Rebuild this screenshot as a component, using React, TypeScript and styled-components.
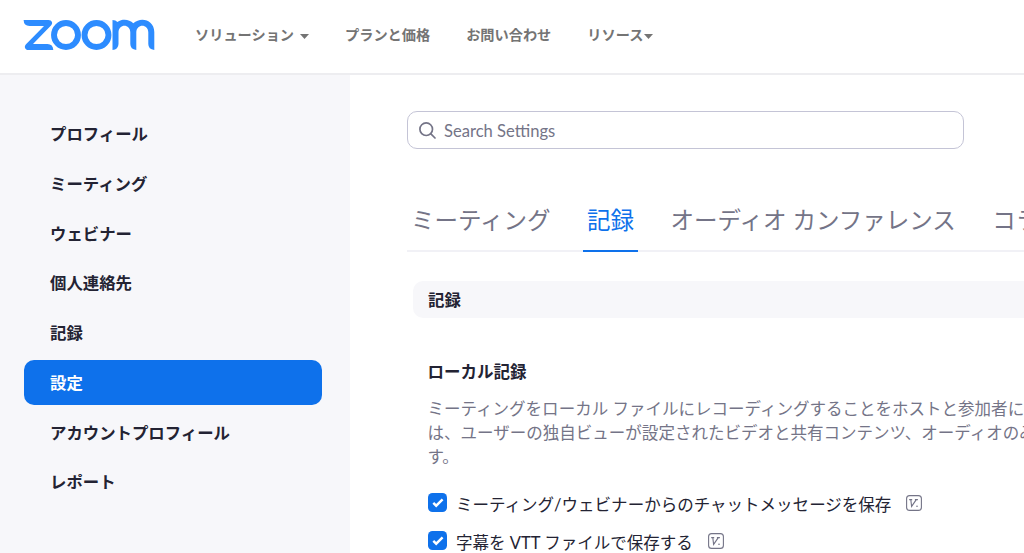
import React from "react";
import styled, { createGlobalStyle } from "styled-components";

const GlobalStyle = createGlobalStyle`
  * { box-sizing: border-box; }
  body {
    margin: 0;
    overflow: hidden;
    background: #fff;
    color: #232333;
    font-family: Lato, "Noto Sans CJK JP", sans-serif;
  }
`;

const Page = styled.div`
  display: flex;
  flex-direction: column;
  width: 100%;
  height: 553px;
  overflow: hidden;
`;

const Header = styled.header`
  display: flex;
  align-items: center;
  flex: none;
  height: 75px;
  padding: 0 0 4px 23px;
  border-bottom: 2px solid #ededf0;
`;

const Logo = styled.svg`
  flex: none;
  display: block;
  width: 132px;
  height: 32px;
  margin-right: 40px;
`;

const Nav = styled.nav`
  display: flex;
  align-items: center;
  gap: 36px;
  padding-top: 1px;
`;

const NavLink = styled.a<{ $caretGap?: number }>`
  display: flex;
  align-items: center;
  gap: ${(p) => p.$caretGap ?? 0}px;
  height: 24px;
  color: #747474;
  font-size: 14.2px;
  font-weight: 700;
  line-height: 24px;
  white-space: nowrap;
`;

const Caret = styled.svg`
  display: block;
  width: 9px;
  height: 5px;
  margin-top: 3px;
`;

const Body = styled.div`
  display: flex;
  flex: 1;
  min-height: 0;
`;

const Sidebar = styled.aside`
  display: flex;
  flex-direction: column;
  flex: none;
  gap: 4.75px;
  width: 350px;
  padding: 36px 28px 0 23.5px;
  background: #f7f7fa;
`;

const SideItem = styled.a<{ $active?: boolean }>`
  flex: none;
  height: 45px;
  padding-left: 26.5px;
  border-radius: 10px;
  background: ${(p) => (p.$active ? "#0e71eb" : "transparent")};
  color: ${(p) => (p.$active ? "#fff" : "#232333")};
  font-size: 16.4px;
  font-weight: 700;
  line-height: 45px;
`;

const Content = styled.main`
  flex: 1;
  min-width: 0;
  padding: 36px 0 0 57px;
  overflow: hidden;
`;

const SearchBox = styled.div`
  display: flex;
  align-items: center;
  gap: 8px;
  width: 557px;
  height: 38px;
  padding-left: 11px;
  border: 1.5px solid #c4c4d6;
  border-radius: 10px;
  color: #747487;
  font-size: 16.6px;
`;

const SearchText = styled.span`
  padding-top: 2px;
`;

const Tabs = styled.div`
  display: flex;
  gap: 29px;
  width: 900px;
  height: 60px;
  margin-top: 43px;
  border-bottom: 2px solid #f1f1f6;
`;

const Tab = styled.a<{ $active?: boolean }>`
  flex: none;
  height: 60px;
  padding: 0 3.5px 0 4px;
  border-bottom: 2px solid ${(p) => (p.$active ? "#0e71eb" : "transparent")};
  color: ${(p) => (p.$active ? "#0e71eb" : "#747487")};
  font-size: 23.5px;
  line-height: 56px;
  white-space: nowrap;
`;

const SectionTitle = styled.h2`
  height: 37px;
  margin: 29px 0 0 6px;
  padding-left: 15px;
  border-radius: 10px 0 0 10px;
  background: #f7f7fa;
  font-size: 16.4px;
  font-weight: 700;
  line-height: 37px;
`;

const Section = styled.section`
  width: 900px;
  padding: 42px 0 0 20.5px;
`;

const SettingTitle = styled.h3`
  margin: 0;
  font-size: 16.5px;
  font-weight: 700;
  line-height: 24px;
`;

const Description = styled.p`
  margin: 13px 0 0;
  color: #747487;
  font-size: 16.53px;
  line-height: 24px;
  white-space: nowrap;
`;

const Options = styled.div`
  display: flex;
  flex-direction: column;
  gap: 14px;
  margin-top: 23px;
`;

const Option = styled.label`
  display: flex;
  align-items: center;
  height: 24px;
  padding-top: 2px;
  font-size: 16.53px;
  line-height: 22px;
`;

const CheckBox = styled.svg`
  width: 19px;
  height: 19px;
  margin: 0 9.5px 6px 0;
`;

const Badge = styled.svg`
  width: 16px;
  height: 16px;
  margin: 0 0 5px 15px;
`;

const sideItems = [
  "プロフィール",
  "ミーティング",
  "ウェビナー",
  "個人連絡先",
  "記録",
  "設定",
  "アカウントプロフィール",
  "レポート",
];

const tabs = ["ミーティング", "記録", "オーディオ カンファレンス", "コラボレーション デバイス"];

const options = [
  "ミーティング/ウェビナーからのチャットメッセージを保存",
  "字幕を VTT ファイルで保存する",
];

function ZoomLogo() {
  return (
    <Logo viewBox="0 0 132 32" fill="#2d8cff">
      <path d="M.6 1H25.500C29 1 30.300 4.200 28 6.500L10 25H24.500Q30 25.200 30.300 31H5.500C2 31 .7 27.500 3 25.200L21 7H6.500Q.8 6.800 .6 1Z" />
      <g fill="none" stroke="#2d8cff" strokeWidth="5.900">
        <circle cx="43" cy="16" r="12" />
        <circle cx="73.500" cy="16" r="12" />
      </g>
      <path d="M89.500 1Q92.800 1 94.400 2.900C100 -.5 106.500 .6 110.300 4.300C118 -3 131.300 1 131.300 13V31Q125.300 30.300 125.300 25V13.500C125.300 4.500 113.300 4.500 113.300 13.500V31Q107.300 30.300 107.300 25V13.500C107.300 4.500 95.500 4.500 95.500 13.500V25Q95.300 30.500 89.500 31Z" />
    </Logo>
  );
}

function CaretIcon() {
  return (
    <Caret viewBox="0 0 9 5" fill="#747474">
      <path d="M0 0H9L4.500 5Z" />
    </Caret>
  );
}

function SearchIcon() {
  return (
    <svg width="17" height="17" viewBox="0 0 17 17" fill="none" stroke="#747487" strokeWidth="1.700" strokeLinecap="round">
      <circle cx="7.200" cy="7.200" r="6.300" />
      <path d="M11.900 11.900L16 16" />
    </svg>
  );
}

export default function App() {
  return (
    <Page>
      <GlobalStyle />
      <Header>
        <ZoomLogo />
        <Nav>
          <NavLink $caretGap={6}>ソリューション<CaretIcon /></NavLink>
          <NavLink>プランと価格</NavLink>
          <NavLink>お問い合わせ</NavLink>
          <NavLink $caretGap={1}>リソース<CaretIcon /></NavLink>
        </Nav>
      </Header>
      <Body>
        <Sidebar>
          {sideItems.map((item) => (
            <SideItem key={item} $active={item === "設定"}>{item}</SideItem>
          ))}
        </Sidebar>
        <Content>
          <SearchBox>
            <SearchIcon />
            <SearchText>Search Settings</SearchText>
          </SearchBox>
          <Tabs>
            {tabs.map((tab) => (
              <Tab key={tab} $active={tab === "記録"}>{tab}</Tab>
            ))}
          </Tabs>
          <SectionTitle>記録</SectionTitle>
          <Section>
            <SettingTitle>ローカル記録</SettingTitle>
            <Description>
              ミーティングをローカル ファイルにレコーディングすることをホストと参加者に許可<br />
              は、ユーザーの独自ビューが設定されたビデオと共有コンテンツ、オーディオのみ<br />
              す。
            </Description>
            <Options>
              {options.map((option) => (
                <Option key={option}>
                  <CheckBox viewBox="0 0 19 19" fill="none">
                    <rect width="19" height="19" rx="4.500" fill="#0e71eb" />
                    <path d="M5.300 9.800L8.200 12.700L14.600 6.300" stroke="#fff" strokeWidth="2.400" />
                  </CheckBox>
                  {option}
                  <Badge viewBox="0 0 16 16" fill="none" stroke="#747487">
                    <rect x=".6" y=".6" width="14.800" height="14.800" rx="3" strokeWidth="1.100" />
                    <path d="M3.200 4.600H6.200M4.800 4.600L5.600 11.400L10.300 4.600M8.900 4.600H11.900" strokeWidth="1.100" />
                    <circle cx="11" cy="11.200" r=".8" fill="#747487" stroke="none" />
                  </Badge>
                </Option>
              ))}
            </Options>
          </Section>
        </Content>
      </Body>
    </Page>
  );
}
